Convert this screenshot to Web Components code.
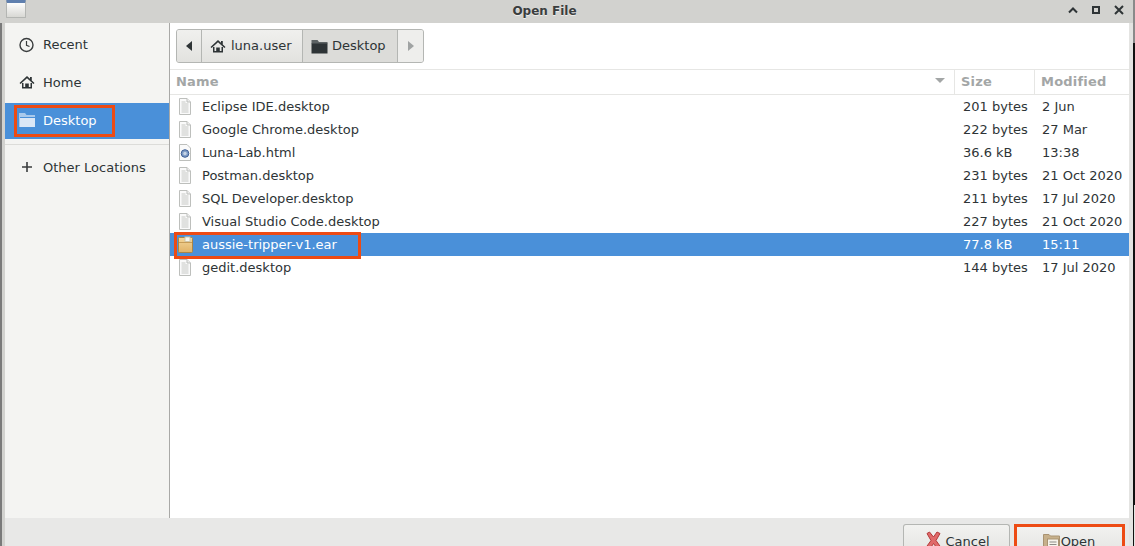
<!DOCTYPE html>
<html><head><meta charset="utf-8"><style>
html,body{margin:0;padding:0;width:1135px;height:546px;overflow:hidden;background:#e8e8e7;font-family:"DejaVu Sans",sans-serif}
</style></head><body>
<file-dialog></file-dialog>
<script>
const I={
clock:`<svg width="16" height="16" viewBox="0 0 16 16"><circle cx="7.500" cy="8" r="6.500" fill="none" stroke="#3a3d3e" stroke-width="1.4"/><path d="M7.500 4v4.300l3 1.200" fill="none" stroke="#3a3d3e" stroke-width="1.200"/></svg>`,
home:`<svg width="16" height="16" viewBox="0 0 16 16"><path d="M8 2L.5 9l1.100 1.100L8 4.200l6.400 5.900L15.500 9l-2.700-2.500V3h-1.800v1.800z" fill="#2e3436"/><path d="M3 9v5.500h10V9h-1.500v4H9.800V9.500H6.200V13H4.500V9z" fill="#2e3436"/></svg>`,
folderW:`<svg width="16" height="16" viewBox="0 0 16 16"><path d="M0 1h6l1.500 2H16v2H0z" fill="#a9c9ec"/><path d="M1 6h15v9H1z" fill="#dbe7f6"/><path d="M0 1h1v14H0z" fill="#a9c9ec"/></svg>`,
folderD:`<svg width="17" height="15" viewBox="0 0 17 15"><path d="M.5 1h6l1.500 2h8.500v2H.5z" fill="#5d6364"/><rect x=".5" y="4.500" width="16" height="10" fill="#2e3436"/></svg>`,
plus:`<svg width="16" height="16" viewBox="0 0 16 16"><path d="M7.200 3h1.600v4.200H13v1.600H8.800V13H7.200V8.800H3V7.200h4.200z" fill="#3a3d3e"/></svg>`,
doc:`<svg width="14" height="17" viewBox="0 0 14 17"><path d="M1.500.5h7.500l3.500 3.500v12.500H1.500z" fill="#fafafa" stroke="#bdbfbc"/><path d="M9 .5v3.500h3.500" fill="#eee" stroke="#bdbfbc"/><path d="M3.500 4h4M3.500 6h7M3.500 8h7M3.500 10h7M3.500 12h7M3.500 14h7" stroke="#c6c8c5"/></svg>`,
html:`<svg width="14" height="17" viewBox="0 0 14 17"><path d="M1.500.5h7.500l3.500 3.500v12.500H1.500z" fill="#fafafa" stroke="#bdbfbc"/><circle cx="7" cy="9.500" r="3.800" fill="#7f9cc6" stroke="#3f5f96"/><circle cx="7" cy="9.500" r="1.700" fill="#c7d4e6"/></svg>`,
ear:`<svg width="15" height="17" viewBox="0 0 15 17"><defs><linearGradient id="e" x1="0" y1="0" x2="0" y2="1"><stop offset="0" stop-color="#f3d79b"/><stop offset="1" stop-color="#e0b266"/></linearGradient></defs><rect x=".5" y="1.500" width="14" height="15" rx="1" fill="url(#e)" stroke="#a98546"/><rect x="7" y="1" width="5" height="4.500" fill="#f6f6f0" stroke="#cfc6a8"/><path d="M1 6.500h13" stroke="#c79d58"/></svg>`,
cancel:`<svg width="17" height="19" viewBox="0 0 17 19"><path d="M2 2.500L4.500 1 8.500 6 12 1l3 1.500L11 9.500l5 7L13 18.500 8.500 12.500 4.500 18.500 1 16.500l5-7z" fill="#e06a6a" stroke="#b33a3a" stroke-width="1"/></svg>`,
openI:`<svg width="17" height="16" viewBox="0 0 17 16"><path d="M.5 1.500h5.500l1.500 1.500h9V15.500H.5z" fill="#c7b08b" stroke="#a99372"/><rect x="4.500" y="6" width="11" height="10" fill="#f7f4ec" stroke="#a99372"/><path d="M6.500 9h7M6.500 11.500h7" stroke="#8d8d88"/></svg>`
};
class El extends HTMLElement{
 constructor(){super();this.attachShadow({mode:'open'}).innerHTML=this.constructor.html}
}
function def(n,css,body){customElements.define(n,class extends El{static html=`<style>${css}</style>${body}`})}

def('title-bar',`:host{display:flex;align-items:center;height:23px;background:#d2d2cf;padding-left:6px;font:bold 12px "DejaVu Sans",sans-serif;color:#3a3d3e}
.app{width:20px;height:18px;box-sizing:border-box;border:1px solid #b4b6b3;border-top:3px solid #5f7fae;background:linear-gradient(#fdfdfd,#d8d8d4);border-radius:1px;align-self:flex-start}
.t{flex:1;text-align:center;padding-right:5px;margin-top:-2px;text-shadow:0 1px 0 #eeeeec}
.b{display:flex;gap:14px;padding-right:11px;align-items:center;margin-top:-3px}`,
`<div class="app"></div><div class="t">Open File</div><div class="b">
<svg width="10" height="10" viewBox="0 0 10 10"><path d="M1 7.500l4-4 4 4" fill="none" stroke="#2e3436" stroke-width="2"/></svg>
<svg width="8" height="8" viewBox="0 0 8 8"><rect x="1" y="1" width="6" height="6" fill="none" stroke="#2e3436" stroke-width="2"/></svg>
<svg width="10" height="10" viewBox="0 0 10 10"><path d="M1 1l8 8M9 1l-8 8" fill="none" stroke="#2e3436" stroke-width="2"/></svg></div>`);

def('side-row',`:host{display:flex;align-items:center;height:37px;padding-left:14px;gap:8px;font-size:13px;color:#2e3436;box-sizing:border-box}
:host([sel]){background:#4a90d9;color:#fff}`,`<slot name="i"></slot><slot></slot>`);

def('side-bar',`:host{display:flex;flex-direction:column;width:165px;box-sizing:border-box;background:#f4f4f2;border-right:1px solid #a9a9a7;flex:none;position:relative}
.sep{height:1px;background:#dcdcd9;margin-top:5px}
.mark{position:absolute;left:9px;top:82px;width:101px;height:32px;box-sizing:border-box;border:3px solid #ed4b14}`,
`<side-row style="margin-top:3px"><span slot="i" style="display:flex">${I.clock}</span>Recent</side-row>
<side-row style="height:40px;padding-bottom:2px"><span slot="i" style="display:flex">${I.home}</span>Home</side-row>
<side-row sel style="height:36px;padding-bottom:2px"><span slot="i" style="display:flex">${I.folderW}</span>Desktop</side-row>
<div class="sep"></div>
<side-row style="margin-top:4px;height:36px"><span slot="i" style="display:flex">${I.plus}</span>Other Locations</side-row>
<div class="mark"></div>`);

def('path-bar',`:host{display:flex;height:34px;margin:6px 0 0 6px;align-self:flex-start;box-sizing:border-box;border:1px solid #b4b6b3;border-radius:3px;font-size:13px;color:#2e3436;overflow:hidden;background:#e9e9e7}
div{display:flex;align-items:center;gap:4px;box-sizing:border-box;border-right:1px solid #b4b6b3;height:100%;background:linear-gradient(#f0f0ee,#e2e2df)}
div:last-child{border:0;background:#eeeeec}
span{margin-top:-2px}
.cur{background:#dcdcd9}`,
`<div style="width:25px;justify-content:center"><svg width="6" height="10"><path d="M6 0v10L0 5z" fill="#2e3436"/></svg></div>
<div style="width:101px;padding-left:8px;gap:3px">${I.home}<span style="margin-left:2px">luna.user</span></div>
<div class="cur" style="width:95px;padding-left:8px;gap:4px">${I.folderD}<span>Desktop</span></div>
<div style="width:25px;justify-content:center"><svg width="6" height="10"><path d="M0 0v10l6-5z" fill="#a0a3a3"/></svg></div>`);

def('list-head',`:host{display:flex;height:26px;box-sizing:border-box;border-top:1px solid #e6e6e4;border-bottom:1px solid #e6e6e4;margin-top:6px;font:bold 13px "DejaVu Sans",sans-serif;color:#a3a6a6;align-items:center;letter-spacing:.2px}
div{height:100%;display:flex;align-items:center;box-sizing:border-box;padding-left:6px;padding-bottom:2px}
.n{width:785px;justify-content:space-between;padding-right:9px;border-right:1px solid #e6e6e4}
.s{width:80px;border-right:1px solid #e6e6e4}`,
`<div class="n"><span>Name</span><svg width="10" height="6"><path d="M0 0h10L5 5z" fill="#a3a6a6"/></svg></div><div class="s">Size</div><div>Modified</div>`);

def('file-row',`:host{display:grid;grid-template-columns:32px 752px 80px 1fr;height:23px;align-items:center;font-size:13px;color:#2e3436;box-sizing:border-box}
:host([sel]){background:#4a90d9;color:#fff}
.i{display:flex;justify-content:flex-start;padding-left:8px}
.s{padding-left:9px}.m{padding-left:8px;white-space:nowrap}`,
`<span class="i"><slot name="i"></slot></span><span><slot></slot></span><span class="s"><slot name="s"></slot></span><span class="m"><slot name="m"></slot></span>`);

const rows=[['doc','Eclipse IDE.desktop','201 bytes','2 Jun'],['doc','Google Chrome.desktop','222 bytes','27 Mar'],['html','Luna-Lab.html','36.6 kB','13:38'],['doc','Postman.desktop','231 bytes','21 Oct 2020'],['doc','SQL Developer.desktop','211 bytes','17 Jul 2020'],['doc','Visual Studio Code.desktop','227 bytes','21 Oct 2020'],['ear','aussie-tripper-v1.ear','77.8 kB','15:11'],['doc','gedit.desktop','144 bytes','17 Jul 2020']];
def('file-pane',`:host{display:flex;flex-direction:column;flex:1;background:#fff;min-width:0;position:relative}
.mark{position:absolute;left:4px;top:209px;width:187px;height:27px;box-sizing:border-box;border:3px solid #ed4b14}`,
`<path-bar></path-bar><list-head></list-head><div>${rows.map(r=>`<file-row ${r[0]=='ear'?'sel':''}><span slot="i" style="display:flex">${I[r[0]]}</span>${r[1]}<span slot="s">${r[2]}</span><span slot="m">${r[3]}</span></file-row>`).join('')}</div><div class="mark"></div>`);

def('dlg-btn',`:host{display:flex;align-items:flex-start;justify-content:center;gap:3px;box-sizing:border-box;height:40px;padding-top:6px;font-size:13px;color:#2e3436;border:1px solid #b4b6b3;border-bottom:0;border-radius:3px 3px 0 0;background:linear-gradient(#f2f2f0,#e0e0dd)}
.t{padding-top:3px}`,
`<slot name="i"></slot><span class="t"><slot></slot></span>`);

def('file-dialog',`:host{display:flex;flex-direction:column;width:1135px;height:546px;position:relative;overflow:hidden;background:#e8e8e7}
.main{display:flex;height:495px;margin-left:5px;margin-right:6px;background:#fff}
.edgeL{position:absolute;left:0;top:23px;bottom:0;width:2px;background:#7a7a7a}
.edgeL2{position:absolute;left:2px;top:23px;bottom:0;width:3px;background:#d2d2cf}
.edgeR{position:absolute;right:0;top:23px;bottom:0;width:6px;background:#e4e4e2}
.gray{position:absolute;right:0;top:0;height:43px;width:2px;background:#8a8a8a}
.black{position:absolute;right:0;top:43px;height:462px;width:2px;background:#111}
.black2{position:absolute;right:1px;top:505px;bottom:0;width:1px;background:#111}
.foot{display:flex;justify-content:flex-end;gap:5px;padding:6px 12px 0 0;height:28px;box-sizing:border-box}
.mark{position:absolute;left:1014px;top:524px;width:111px;height:30px;box-sizing:border-box;border:3px solid #ed4b14}`,
`<title-bar></title-bar><div class="main"><side-bar></side-bar><file-pane></file-pane></div>
<div class="foot"><dlg-btn style="width:107px;padding-left:2px"><span slot="i" style="display:flex">${I.cancel}</span>Cancel</dlg-btn><dlg-btn style="width:108px"><span slot="i" style="display:flex;margin-top:2px;margin-right:-2px">${I.openI}</span>Open</dlg-btn></div>
<div class="edgeL"></div><div class="edgeL2"></div><div class="edgeR"></div><div class="gray"></div><div class="black"></div><div class="black2"></div><div class="mark"></div>`);
</script></body></html>
